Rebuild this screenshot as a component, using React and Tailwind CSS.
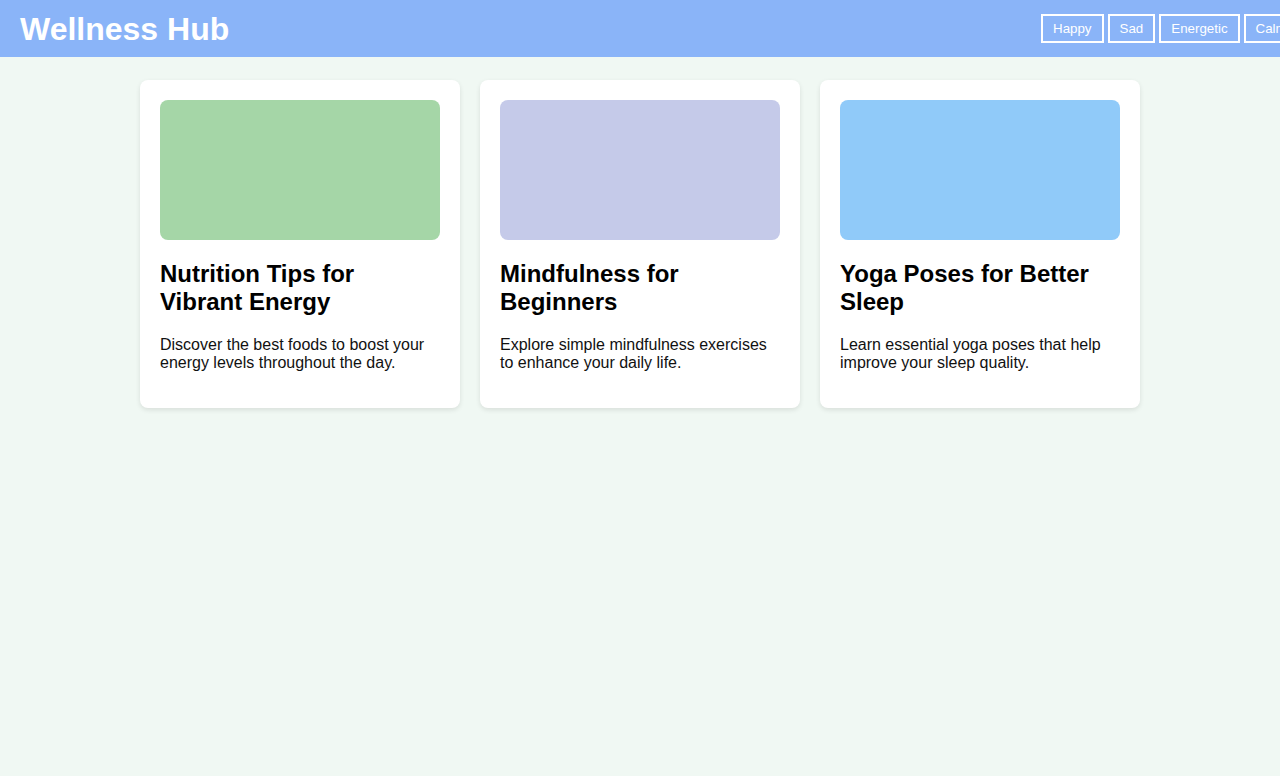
const moods = ['Happy', 'Sad', 'Energetic', 'Calm'];

const articles = [
  {
    title: 'Nutrition Tips for Vibrant Energy',
    text: 'Discover the best foods to boost your energy levels throughout the day.',
    color: 'bg-[#a5d6a7]',
  },
  {
    title: 'Mindfulness for Beginners',
    text: 'Explore simple mindfulness exercises to enhance your daily life.',
    color: 'bg-[#c5cae9]',
  },
  {
    title: 'Yoga Poses for Better Sleep',
    text: 'Learn essential yoga poses that help improve your sleep quality.',
    color: 'bg-[#90caf9]',
  },
];

export default function App() {
  return (
    <div className="min-h-screen overflow-x-hidden bg-[#f0f8f3] font-['Liberation_Sans',Arial,sans-serif] text-black">
      <header className="flex h-[57px] items-center bg-[#8ab4f8] px-5">
        <h1 className="flex-1 text-[32px] font-bold leading-none text-white">Wellness Hub</h1>
        <nav className="flex w-[219px] shrink-0 gap-1 whitespace-nowrap">
          {moods.map((m) => (
            <button
              key={m}
              className="shrink-0 border-2 border-white bg-transparent px-[10px] py-[5px] text-[13.333px] leading-[15px] text-white"
            >
              {m}
            </button>
          ))}
        </nav>
      </header>

      <main className="mx-auto mt-[23px] grid w-[1000px] grid-cols-3 gap-5">
        {articles.map((a) => (
          <div key={a.title} className="rounded-lg bg-white p-5 shadow-[0_2px_5px_rgba(0,0,0,0.1)]">
            <div className={`h-[140px] rounded-lg ${a.color}`}></div>
            <h3 className="my-5 text-2xl font-bold leading-[28px]">{a.title}</h3>
            <p className="mb-4 text-base leading-[18px] text-[#111]">{a.text}</p>
          </div>
        ))}
      </main>
    </div>
  );
}
